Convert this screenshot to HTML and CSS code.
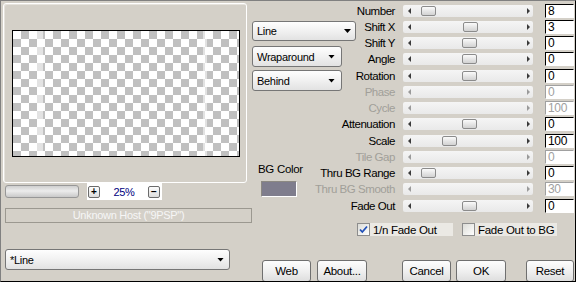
FILE: index.html
```html
<!DOCTYPE html>
<html lang="en">

<head>
    <meta charset="UTF-8">
    <title>Line Effect</title>
    <link rel="stylesheet" href="styles.css">
</head>

<body>

    <div class="window">

        <!-- Left: preview -->
        <div class="left">
            <div class="preview-frame">
                <div class="preview"></div>
            </div>
            <div class="zoom-row">
                <div class="zoom-slider"></div>
                <div class="zoom-box">
                    <span class="mini-btn">+</span>
                    <span class="zoom-value">25%</span>
                    <span class="mini-btn">&minus;</span>
                </div>
            </div>
            <div class="status">Unknown Host (&quot;9PSP&quot;)</div>
            <div class="combo combo-preset"><span>*Line</span><i class="caret"></i></div>
        </div>

        <!-- Right: parameters -->
        <div class="right">
            <div class="params">
                <div class="side">
                    <div class="combo combo-line"><span>Line</span><i class="caret"></i></div>
                    <div class="combo combo-mode"><span>Wraparound</span><i class="caret"></i></div>
                    <div class="combo combo-mode combo-last"><span>Behind</span><i class="caret"></i></div>
                    <div class="bg-label">BG Color</div>
                    <div class="swatch"></div>
                </div>

                <div class="label"><span>Number</span></div>
                <div class="slider"><i class="arr arr-l"></i><b class="thumb" style="left: 18px"></b><i class="arr arr-r"></i></div>
                <div class="field">8</div>

                <div class="label"><span>Shift X</span></div>
                <div class="slider"><i class="arr arr-l"></i><b class="thumb" style="left: 60px"></b><i class="arr arr-r"></i></div>
                <div class="field">3</div>

                <div class="label"><span>Shift Y</span></div>
                <div class="slider"><i class="arr arr-l"></i><b class="thumb" style="left: 59px"></b><i class="arr arr-r"></i></div>
                <div class="field">0</div>

                <div class="label"><span>Angle</span></div>
                <div class="slider"><i class="arr arr-l"></i><b class="thumb" style="left: 59px"></b><i class="arr arr-r"></i></div>
                <div class="field">0</div>

                <div class="label"><span>Rotation</span></div>
                <div class="slider"><i class="arr arr-l"></i><b class="thumb" style="left: 59px"></b><i class="arr arr-r"></i></div>
                <div class="field">0</div>

                <div class="label off"><span>Phase</span></div>
                <div class="slider off"><i class="arr arr-l"></i><i class="arr arr-r"></i></div>
                <div class="field off">0</div>

                <div class="label off"><span>Cycle</span></div>
                <div class="slider off"><i class="arr arr-l"></i><i class="arr arr-r"></i></div>
                <div class="field off">100</div>

                <div class="label"><span>Attenuation</span></div>
                <div class="slider"><i class="arr arr-l"></i><b class="thumb" style="left: 59px"></b><i class="arr arr-r"></i></div>
                <div class="field">0</div>

                <div class="label"><span>Scale</span></div>
                <div class="slider"><i class="arr arr-l"></i><b class="thumb" style="left: 39px"></b><i class="arr arr-r"></i></div>
                <div class="field">100</div>

                <div class="label off"><span>Tile Gap</span></div>
                <div class="slider off"><i class="arr arr-l"></i><i class="arr arr-r"></i></div>
                <div class="field off">0</div>

                <div class="label"><span>Thru BG Range</span></div>
                <div class="slider"><i class="arr arr-l"></i><b class="thumb" style="left: 18px"></b><i class="arr arr-r"></i></div>
                <div class="field">0</div>

                <div class="label off"><span>Thru BG Smooth</span></div>
                <div class="slider off"><i class="arr arr-l"></i><i class="arr arr-r"></i></div>
                <div class="field off">30</div>

                <div class="label"><span>Fade Out</span></div>
                <div class="slider"><i class="arr arr-l"></i><b class="thumb" style="left: 59px"></b><i class="arr arr-r"></i></div>
                <div class="field">0</div>
            </div>

            <div class="checks">
                <label class="check check-first">
                    <span class="box">
                        <svg width="11" height="11" viewBox="0 0 11 11"><path d="M2 5.5 L4.3 8 L9 2.5" fill="none" stroke="#2150b8" stroke-width="1.8"/></svg>
                    </span>
                    1/n Fade Out
                </label>
                <label class="check check-second">
                    <span class="box"></span>
                    Fade Out to BG
                </label>
            </div>

            <div class="buttons">
                <button class="btn btn-web">Web</button>
                <button class="btn btn-about">About...</button>
                <button class="btn btn-cancel">Cancel</button>
                <button class="btn btn-ok">OK</button>
                <button class="btn btn-reset">Reset</button>
            </div>
        </div>

    </div>

</body>

</html>
```

FILE: styles.css
```css
* {
    margin: 0;
    padding: 0;
    box-sizing: border-box;
}

body {
    font-family: "Liberation Sans", Arial, sans-serif;
    font-size: 11px;
    letter-spacing: -0.3px;
    color: #000;
    background-color: #d4d0c8;
}

.window {
    width: 576px;
    height: 282px;
    display: flex;
    overflow: hidden;
    background-color: #d4d0c8;
    border: 1px solid #000;
    border-top-color: #808080;
    border-left-color: #808080;
}

/* Left panel */
.left {
    width: 251px;
    flex-shrink: 0;
    display: flex;
    flex-direction: column;
}

.preview-frame {
    width: 244px;
    height: 180px;
    margin: 2px 0 0 2px;
    border: 1px solid #fff;
    border-radius: 3px;
    box-shadow: inset 1px 1px 0 #e6e3dd;
    padding: 26px 0 0 8px;
}

.preview {
    width: 228px;
    height: 127px;
    border: 1px solid #000;
    background:
        linear-gradient(to right, transparent 24px, rgba(255, 255, 255, 0.55) 24px, rgba(255, 255, 255, 0.55) 30px, transparent 30px, transparent 190px, rgba(255, 255, 255, 0.55) 190px, rgba(255, 255, 255, 0.55) 194px, transparent 194px),
        conic-gradient(#c0c0c0 0 25%, #fff 0 50%, #c0c0c0 0 75%, #fff 0) 0 0 / 16px 16px;
}

.zoom-row {
    height: 17px;
    display: flex;
    align-items: center;
    padding-left: 4px;
}

.zoom-slider {
    width: 74px;
    height: 13px;
    border: 1px solid #979797;
    border-radius: 3px;
    background: linear-gradient(#cfcfcf, #ececec 45%, #e2e2e2 60%, #c9c9c9);
}

.zoom-box {
    width: 75px;
    height: 17px;
    margin-left: 8px;
    background-color: #fff;
    display: flex;
    align-items: center;
    padding: 0 2px 0 1px;
}

.mini-btn {
    width: 12px;
    height: 12px;
    border: 1px solid #6b6b6b;
    border-radius: 2px;
    background: linear-gradient(#fdfdfd, #dcdcdc);
    font-size: 10px;
    font-weight: bold;
    line-height: 9px;
    text-align: center;
    letter-spacing: 0;
}

.zoom-value {
    flex: 1;
    text-align: center;
    color: #000080;
    font-size: 11px;
}

.status {
    width: 247px;
    height: 15px;
    margin: 8px 0 0 4px;
    border: 1px solid #9b9890;
    color: #f6f6f6;
    text-align: center;
    line-height: 13px;
}

.combo {
    height: 21px;
    border: 1px solid #767676;
    border-radius: 3px;
    background: linear-gradient(#fefefe, #f1f1f1 50%, #e2e2e2);
    display: flex;
    align-items: center;
    justify-content: space-between;
    padding: 0 5px 0 4px;
}

.caret {
    width: 7px;
    height: 4px;
    background-color: #000;
    clip-path: polygon(0 0, 100% 0, 50% 100%);
}

.combo-preset {
    width: 225px;
    margin: 26px 0 0 4px;
}

/* Right panel */
.right {
    flex: 1;
    display: flex;
    flex-direction: column;
}

.params {
    margin-top: 2px;
    display: grid;
    grid-template-columns: 93px 50px 138px 41px;
    grid-template-rows: 16px 16px 16px 17px 16px 16px 16px 17px 16px 16px 16px 17px 16px;
}

.side {
    grid-column: 1;
    grid-row: 1 / 14;
    padding-top: 18px;
    display: flex;
    flex-direction: column;
}

.combo-line {
    width: 104px;
    height: 20px;
    flex-shrink: 0;
    padding-right: 4px;
}

.combo-mode {
    width: 90px;
    flex-shrink: 0;
    margin-top: 5px;
    padding-right: 6px;
}

.combo-last {
    margin-top: 3px;
}

.bg-label {
    margin: 71px 0 0 6px;
    line-height: 14px;
    font-size: 11.5px;
}

.swatch {
    width: 36px;
    height: 16px;
    margin: 5px 0 0 9px;
    background-color: #7f7d8d;
    border: 1px solid #fff;
    border-top-color: #8c8982;
    border-left-color: #8c8982;
}

.label {
    grid-column: 2;
    display: flex;
    justify-content: flex-end;
    white-space: nowrap;
    padding-top: 1px;
    line-height: 14px;
    font-size: 11.5px;
    letter-spacing: -0.45px;
}

.label.off {
    color: #a19f99;
}

.slider {
    grid-column: 3;
    position: relative;
    width: 130px;
    height: 12px;
    margin: 2px 0 0 8px;
    border-radius: 2px;
    background: linear-gradient(#f5f5f5, #e9e9e9);
    display: flex;
    align-items: center;
    justify-content: space-between;
    padding: 0 3px 0 5px;
}

.arr {
    width: 3px;
    height: 6px;
    background-color: #3a3a3a;
}

.arr-l {
    clip-path: polygon(100% 0, 100% 100%, 0 50%);
}

.arr-r {
    clip-path: polygon(0 0, 100% 50%, 0 100%);
}

.slider.off .arr {
    background-color: #9a9a9a;
}

.thumb {
    position: absolute;
    top: 1px;
    width: 15px;
    height: 10px;
    border: 1px solid #8b8b8b;
    border-radius: 2px;
    background: linear-gradient(#fbfbfb, #e6e6e6 50%, #d2d2d2);
}

.field {
    grid-column: 4;
    width: 29px;
    height: 14px;
    margin: 1px 0 0 12px;
    background-color: #fff;
    border: 1px solid #fff;
    border-top-color: #000;
    border-left-color: #000;
    padding-left: 2px;
    font-size: 12px;
    line-height: 12px;
}

.field.off {
    color: #a0a0a0;
    border-top-color: #a0a0a0;
    border-left-color: #a0a0a0;
}

/* Checkboxes */
.checks {
    margin-top: 9px;
    padding-left: 105px;
    display: flex;
    gap: 9px;
}

.check {
    height: 13px;
    background-color: #ebe9e4;
    display: flex;
    align-items: center;
    gap: 3px;
    font-size: 11.5px;
}

.check-first {
    width: 96px;
}

.check-second {
    width: 95px;
}

.box {
    width: 13px;
    height: 13px;
    border: 1px solid #8d8d8d;
    background: linear-gradient(135deg, #dcdcd7, #fff);
    display: flex;
    align-items: center;
    justify-content: center;
}

/* Buttons */
.buttons {
    margin-top: 24px;
    padding-left: 10px;
    display: flex;
}

.btn {
    height: 22px;
    border: 1px solid #6f6f6f;
    border-radius: 3px;
    background: linear-gradient(#fdfdfd, #f0f0f0 50%, #dedede);
    font-family: "Liberation Sans", Arial, sans-serif;
    font-size: 11.5px;
    letter-spacing: -0.3px;
    color: #000;
}

.btn-web {
    width: 49px;
}

.btn-about {
    width: 50px;
    margin-left: 6px;
}

.btn-cancel {
    width: 49px;
    margin-left: 35px;
}

.btn-ok {
    width: 50px;
    margin-left: 5px;
}

.btn-reset {
    width: 48px;
    margin-left: 20px;
}
```
